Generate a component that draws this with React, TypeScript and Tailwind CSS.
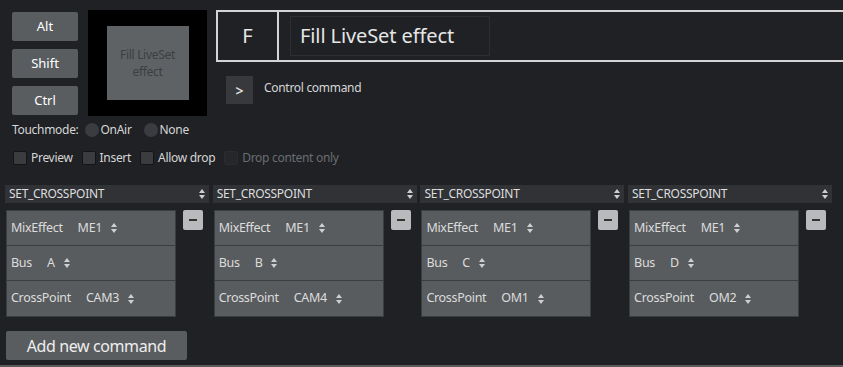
import React from "react";

const UpDown = ({ className = "" }: { className?: string }) => (
  <svg width="6" height="10" viewBox="0 0 6 10" className={className} fill="currentColor">
    <path d="M3 0 L6 4 L0 4 Z" />
    <path d="M0 6 L6 6 L3 10 Z" />
  </svg>
);

const commands = [
  { bus: "A", cp: "CAM3" },
  { bus: "B", cp: "CAM4" },
  { bus: "C", cp: "OM1" },
  { bus: "D", cp: "OM2" },
];

const ParamRow = ({ label, value, last }: { label: string; value: string; last?: boolean }) => (
  <div
    className={
      "flex h-[35px] items-center pl-[4px] text-[12.5px] tracking-[-0.3px] text-[#dcdcdc] " +
      (last ? "" : "border-b border-[#3b3e41]")
    }
  >
    <span>{label}</span>
    <span className="ml-[15px] flex items-center gap-[9px]">
      {value}
      <UpDown className="text-[#cfcfcf]" />
    </span>
  </div>
);

const Command = ({ bus, cp }: { bus: string; cp: string }) => (
  <div className="flex w-[207.7px] shrink-0 flex-col">
    <div className="flex h-[18px] w-[204px] items-center justify-between bg-[#303236] pl-[4px] pr-[4px] text-[12px] tracking-[-0.3px] text-[#dedede]">
      <span>SET_CROSSPOINT</span>
      <UpDown className="text-[#cfcfcf]" />
    </div>
    <div className="mt-[7px] flex gap-[7px] pl-[1px]">
      <div className="w-[170px] border border-[#3b3e41] bg-[#595c5f]">
        <ParamRow label="MixEffect" value="ME1" />
        <ParamRow label="Bus" value={bus} />
        <ParamRow label="CrossPoint" value={cp} last />
      </div>
      <button className="flex h-[20px] w-[20px] items-center justify-center rounded-[2px] bg-[#b9babb]">
        <span className="block h-[2px] w-[8px] bg-[#333]" />
      </button>
    </div>
  </div>
);

const Check = ({ label, disabled }: { label: string; disabled?: boolean }) => (
  <label className={"flex items-center gap-[4px] " + (disabled ? "text-[#6b6d70]" : "text-[#d6d6d6]")}>
    <span
      className={
        "block h-[14px] w-[14px] rounded-[2px] border " +
        (disabled ? "border-[#2a2c2f] bg-[#25272a]" : "border-[#151515] bg-[#3a3c3f]")
      }
    />
    {label}
  </label>
);

const Radio = ({ label }: { label: string }) => (
  <label className="flex items-center gap-[2px]">
    <span className="block h-[14px] w-[14px] rounded-full bg-[#3a3c3f]" />
    {label}
  </label>
);

export default function App() {
  return (
    <div
      className="relative h-[367px] w-[843px] overflow-hidden border-b-2 border-[#5a5a5a] bg-[#1f2125]"
      style={{ fontFamily: '"Noto Sans", "Open Sans", sans-serif' }}
    >
      <div className="flex pt-[10px]">
        <div className="flex pl-[12px]">
          <div className="flex flex-col gap-[8px] pt-[2px]">
            {["Alt", "Shift", "Ctrl"].map((k) => (
              <button
                key={k}
                className="h-[29px] w-[66px] rounded-[2px] bg-[#5a5d60] text-[13px] text-white"
              >
                {k}
              </button>
            ))}
          </div>
          <div className="ml-[10px] flex h-[106px] w-[119px] items-center justify-center bg-black">
            <div className="flex h-[74px] w-[82px] items-center justify-center bg-[#5f6265] text-center text-[12px] leading-[17px] tracking-[-0.3px] text-[#3c3e40]">
              Fill LiveSet
              <br />
              effect
            </div>
          </div>
        </div>
        <div className="ml-[9px] flex-1">
          <div className="flex h-[52px] border-y-2 border-l-2 border-[#d4d4d4]">
            <div className="flex w-[61px] items-center justify-center border-r-2 border-[#d4d4d4] text-[20px] text-[#e6e6e6]">
              F
            </div>
            <div className="ml-[11px] mt-[4px] flex h-[40px] w-[200px] items-center border border-[#2c2e31] pl-[9px] text-[20px] tracking-[-0.1px] text-[#e6e6e6]">
              Fill LiveSet effect
            </div>
          </div>
          <div className="mt-[14px] flex items-center pl-[10px]">
            <button className="flex h-[28px] w-[27px] items-center justify-center bg-[#38393c] text-[14px] font-semibold text-[#e0e0e0]">
              &gt;
            </button>
            <span className="ml-[11px] -mt-[4px] text-[12px] tracking-[-0.3px] text-[#d6d6d6]">Control command</span>
          </div>
        </div>
      </div>

      <div className="mt-[5px] flex items-center gap-[6px] pl-[12px] text-[12px] tracking-[-0.3px] text-[#d6d6d6]">
        <span>Touchmode:</span>
        <div className="flex items-center gap-[12px]">
          <Radio label="OnAir" />
          <Radio label="None" />
        </div>
      </div>

      <div className="mt-[10px] flex items-center gap-[9px] pl-[13px] text-[12px] tracking-[-0.3px]">
        <Check label="Preview" />
        <Check label="Insert" />
        <Check label="Allow drop" />
        <Check label="Drop content only" disabled />
      </div>

      <div className="mt-[18px] flex pl-[5px]">
        {commands.map((c, i) => (
          <Command key={i} bus={c.bus} cp={c.cp} />
        ))}
      </div>

      <button className="ml-[6px] mt-[14px] h-[29px] w-[181px] rounded-[2px] bg-[#5a5d60] text-[16px] tracking-[-0.4px] text-[#eeeeee]">
        Add new command
      </button>
    </div>
  );
}
